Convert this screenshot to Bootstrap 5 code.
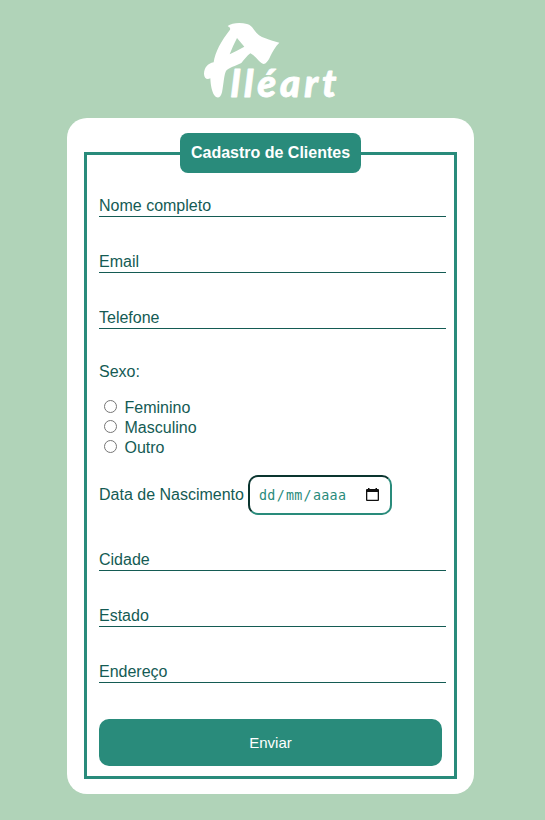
<!DOCTYPE html>
<html lang="pt-BR">
<head>
<meta charset="utf-8">
<meta name="viewport" content="width=device-width, initial-scale=1">
<title>Alléart - Cadastro de Clientes</title>
<link rel="stylesheet" href="https://cdn.jsdelivr.net/npm/bootstrap@5.3.0/dist/css/bootstrap.min.css">
<style>
body{background:#b0d3b8;color:#145b54;font-family:"Liberation Sans",Arial,sans-serif;font-size:16px;line-height:18px;height:820px;overflow:hidden}
.brand{width:150px;height:90px;margin:15px 0 0 195px}
.brand text{font-family:Lato,sans-serif;font-weight:900;font-style:italic;font-size:116px;stroke:#fff;stroke-width:2.5px;stroke-linejoin:round}
.panel{width:407px;height:676px;margin:13px 0 0 67px;padding:15px 17px;border-radius:20px}
.frame{width:373px;height:627px;margin-top:19px;padding:0 8px 0 12px;border:3px solid #298b7b}
.title{width:181px;height:40px;margin:-22px auto 23px;left:-2px;border-radius:8px;background:#298b7b}
.line-input{height:21px;margin-bottom:35px;padding:0;border:0;border-bottom:1px solid #145b54;color:#145b54;background:none;font-size:16px;line-height:18px;outline:0;border-radius:0;display:block;width:347px}
.line-input::placeholder{color:#145b54;opacity:1}
.heading{margin:-1px 0 16px}
.choice{height:20px}
.choice input{width:13px;height:13px;margin:0 7.5px 0 5px;position:relative;top:-1px}
.choice span{padding-top:2px}
.birth{margin:18px 0 35px}
.date-box{width:144px;height:40px;border:2px solid #298b7b;border-top-color:#0a352f;border-left-color:#0a352f;border-radius:10px;padding:0 11px 0 8px;font-family:"DejaVu Sans Mono",monospace;font-size:13.333px;letter-spacing:.3px;color:#298b7b}
.date-text{padding-top:2px}
.date-text span{padding:0 1px}
.send{width:343px;height:47px;border:0;border-radius:10px;background:#298b7b;font-size:15px;margin-top:1px;padding:2px 0 0}
</style>
<script src="https://cdn.jsdelivr.net/npm/bootstrap@5.3.0/dist/js/bootstrap.bundle.min.js"></script>
</head>
<body>
<header class="d-flex">
<svg class="brand" viewBox="0 0 450 270" fill="#fff" role="img" aria-label="Alléart">
<path fill-rule="evenodd" d="M98 33C110 24 135 22 156 27C166 29 170 35 177 44C186 57 197 66 211 70C224 75 240 80 253 83C241 94 233 110 226 124C220 138 212 147 206 147C192 144 184 124 166 115C156 122 148 134 139 144C122 153 101 158 93 168C87 180 86 207 81 232C77 250 66 252 58 241C50 229 47 210 46 190C36 195 28 191 27 177C27 159 38 145 56 142C60 111 79 77 105 44C107 38 103 37 98 33ZM126 69Q114 92 104 118Q126 107 148 95Z"/>
<text x="107" y="246" textLength="317" lengthAdjust="spacing">lléart</text>
</svg>
</header>
<main class="panel bg-white">
<form class="frame" onsubmit="return false">
<h1 class="title d-flex align-items-center justify-content-center position-relative text-white fw-bold fs-6">Cadastro de Clientes</h1>
<input class="line-input" type="text" placeholder="Nome completo" aria-label="Nome completo">
<input class="line-input" type="text" placeholder="Email" aria-label="Email">
<input class="line-input" type="text" placeholder="Telefone" aria-label="Telefone">
<p class="heading">Sexo:</p>
<div class="choices">
<label class="choice d-flex align-items-center"><input type="radio" name="sexo"><span>Feminino</span></label>
<label class="choice d-flex align-items-center"><input type="radio" name="sexo"><span>Masculino</span></label>
<label class="choice d-flex align-items-center"><input type="radio" name="sexo"><span>Outro</span></label>
</div>
<div class="birth d-flex align-items-center gap-1">
<span>Data de Nascimento</span>
<div class="date-box d-flex align-items-center justify-content-between">
<span class="date-text text-nowrap"><span>dd</span>/<span>mm</span>/<span>aaaa</span></span>
<svg width="13" height="14" viewBox="0 0 13 14"><path fill="#101010" fill-rule="evenodd" d="M2 0h1.5v1h6V0H11v1h1q1 0 1 1v10q0 1-1 1H1q-1 0-1-1V2q0-1 1-1h1ZM1.3 4v7.7h10.4V4Z"/></svg>
</div>
</div>
<div class="address">
<input class="line-input" type="text" placeholder="Cidade" aria-label="Cidade">
<input class="line-input" type="text" placeholder="Estado" aria-label="Estado">
<input class="line-input" type="text" placeholder="Endereço" aria-label="Endereço">
</div>
<button class="send btn text-white" type="submit">Enviar</button>
</form>
</main>
</body>
</html>
